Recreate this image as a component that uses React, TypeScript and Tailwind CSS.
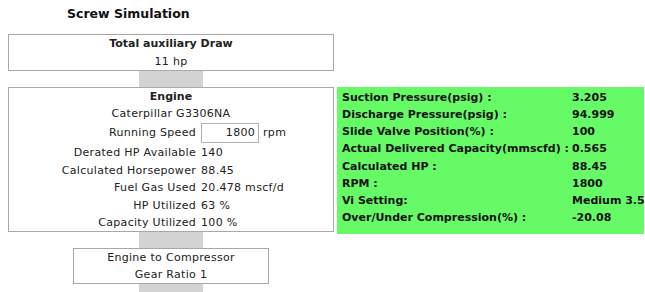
import React from "react";

const font = { fontFamily: '"DejaVu Sans", Verdana, sans-serif' };

function Connector({ h }: { h: string }) {
  return <div className={`w-[64px] bg-[#d3d3d3] ${h}`} />;
}

const engineRows: [string, React.ReactNode][] = [
  ["Derated HP Available", "140"],
  ["Calculated Horsepower", "88.45"],
  ["Fuel Gas Used", "20.478 mscf/d"],
  ["HP Utilized", "63 %"],
  ["Capacity Utilized", "100 %"],
];

const greenRows: [string, string][] = [
  ["Suction Pressure(psig) :", "3.205"],
  ["Discharge Pressure(psig) :", "94.999"],
  ["Slide Valve Position(%) :", "100"],
  ["Actual Delivered Capacity(mmscfd) :", "0.565"],
  ["Calculated HP :", "88.45"],
  ["RPM :", "1800"],
  ["Vi Setting:", "Medium 3.5"],
  ["Over/Under Compression(%) :", "-20.08"],
];

export default function App() {
  return (
    <div className="w-[645px] h-[292px] overflow-hidden bg-white text-[11px] text-[#222]" style={font}>
      <div className="pl-[67px] pt-[5px] h-[34px] text-[12.5px] font-bold text-[#111]">Screw Simulation</div>
      <div className="flex pl-[8px] gap-[3px]">
        <div className="w-[326px] flex flex-col items-center">
          <div className="w-full h-[37px] border border-[#a8a8a8] flex flex-col items-center leading-[17.5px]">
            <div className="font-bold">Total auxiliary Draw</div>
            <div className="tracking-[0.3px]">11 hp</div>
          </div>
          <Connector h="h-[16px]" />
          <div className="w-full h-[145px] border border-[#a8a8a8] flex flex-col items-center leading-[17.5px] tracking-[0.3px]">
            <div className="h-[17px] font-bold tracking-normal">Engine</div>
            <div className="h-[17px]">Caterpillar G3306NA</div>
            <div className="grid grid-cols-[auto_auto] gap-x-[5px] items-center pl-[6px]">
              <div className="text-right h-[22px] flex items-center justify-end">Running Speed</div>
              <div className="flex items-center h-[22px]">
                <div className="w-[58px] h-[20px] border border-[#b0b0b0] text-right pr-[3px] leading-[18px]">1800</div>
                <span className="ml-[4px]">rpm</span>
              </div>
              {engineRows.map(([l, v]) => (
                <React.Fragment key={l}>
                  <div className="text-right h-[17.5px] whitespace-nowrap">{l}</div>
                  <div className="h-[17.5px] whitespace-nowrap">{v}</div>
                </React.Fragment>
              ))}
            </div>
          </div>
          <Connector h="h-[16px]" />
          <div className="w-[196px] h-[36px] border border-[#a8a8a8] flex flex-col items-center leading-[17px] tracking-[0.3px]">
            <div>Engine to Compressor</div>
            <div>Gear Ratio 1</div>
          </div>
          <Connector h="h-[20px]" />
        </div>
        <div className="mt-[53px] w-[307px] h-[147px] bg-[#66fa66] pl-[5px] pt-[2px] font-bold text-[#111]">
          <div className="grid grid-cols-[230px_1fr] leading-[17.15px]">
            {greenRows.map(([l, v]) => (
              <React.Fragment key={l}>
                <div className="whitespace-nowrap">{l}</div>
                <div className="whitespace-nowrap">{v}</div>
              </React.Fragment>
            ))}
          </div>
        </div>
      </div>
    </div>
  );
}
